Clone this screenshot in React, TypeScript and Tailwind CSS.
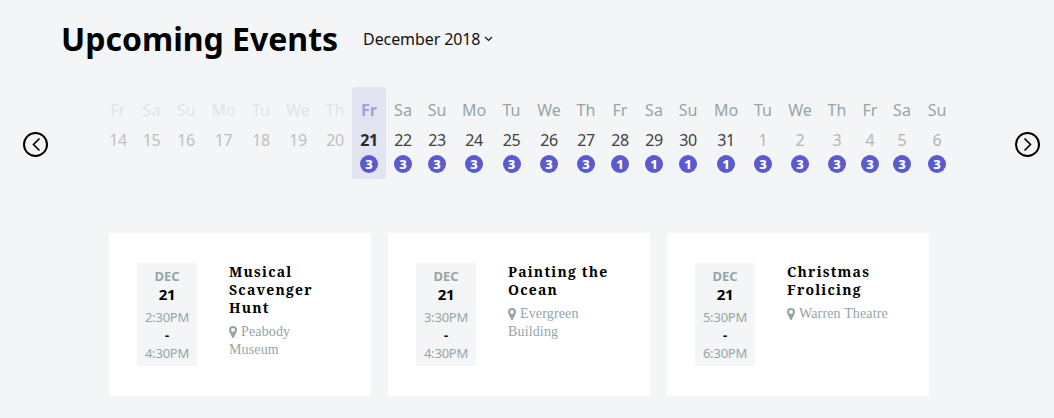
import React from "react";

type Phase = "past" | "active" | "current" | "next";
type Day = { name: string; date: number; count?: number; phase: Phase; width: string };

const days: Day[] = [
  { name: "Fr", date: 14, phase: "past", width: "w-8" },
  { name: "Sa", date: 15, phase: "past", width: "w-[35px]" },
  { name: "Su", date: 16, phase: "past", width: "w-[34px]" },
  { name: "Mo", date: 17, phase: "past", width: "w-[41px]" },
  { name: "Tu", date: 18, phase: "past", width: "w-[34px]" },
  { name: "We", date: 19, phase: "past", width: "w-10" },
  { name: "Th", date: 20, phase: "past", width: "w-[34px]" },
  { name: "Fr", date: 21, count: 3, phase: "active", width: "w-[34px]" },
  { name: "Sa", date: 22, count: 3, phase: "current", width: "w-[34px]" },
  { name: "Su", date: 23, count: 3, phase: "current", width: "w-[34px]" },
  { name: "Mo", date: 24, count: 3, phase: "current", width: "w-10" },
  { name: "Tu", date: 25, count: 3, phase: "current", width: "w-[35px]" },
  { name: "We", date: 26, count: 3, phase: "current", width: "w-10" },
  { name: "Th", date: 27, count: 3, phase: "current", width: "w-[34px]" },
  { name: "Fr", date: 28, count: 1, phase: "current", width: "w-[34px]" },
  { name: "Sa", date: 29, count: 1, phase: "current", width: "w-[34px]" },
  { name: "Su", date: 30, count: 1, phase: "current", width: "w-[34px]" },
  { name: "Mo", date: 31, count: 1, phase: "current", width: "w-[42px]" },
  { name: "Tu", date: 1, count: 3, phase: "next", width: "w-8" },
  { name: "We", date: 2, count: 3, phase: "next", width: "w-[42px]" },
  { name: "Th", date: 3, count: 3, phase: "next", width: "w-8" },
  { name: "Fr", date: 4, count: 3, phase: "next", width: "w-[34px]" },
  { name: "Sa", date: 5, count: 3, phase: "next", width: "w-[30px]" },
  { name: "Su", date: 6, count: 3, phase: "next", width: "w-10" },
];

const nameStyle: Record<Phase, string> = {
  past: "text-[#dfe4e5]",
  active: "font-bold text-[#a19fe0]",
  current: "text-[#95a5a6]",
  next: "text-[#95a5a6]",
};

const dateStyle: Record<Phase, string> = {
  past: "text-[#bfc0c2]",
  active: "font-bold text-[#2b2b2b]",
  current: "text-[#404040]",
  next: "text-[#b3b4b5]",
};

const events = [
  { title: ["Musical", "Scavenger", "Hunt"], place: ["Peabody", "Museum"], start: "2:30PM", end: "4:30PM" },
  { title: ["Painting the", "Ocean"], place: ["Evergreen", "Building"], start: "3:30PM", end: "4:30PM" },
  { title: ["Christmas", "Frolicing"], place: ["Warren Theatre"], start: "5:30PM", end: "6:30PM" },
];

function Arrow({ d, label }: { d: string; label: string }) {
  return (
    <button aria-label={label} className="block size-[25px] shrink-0">
      <svg viewBox="0 0 25 25" className="size-[25px]" fill="none" stroke="black">
        <circle cx="12.5" cy="12.5" r="11.5" strokeWidth="2" />
        <path d={d} strokeWidth="1.6" />
      </svg>
    </button>
  );
}

function Pin() {
  return (
    <svg viewBox="0 0 8 12" className="mr-1 h-3 w-2 shrink-0" fill="currentColor">
      <path
        fillRule="evenodd"
        d="M4 0a4 4 0 0 0-4 4c0 .6.1 1.1.3 1.6L3.1 11.500a1 1 0 0 0 1.8 0L7.700 5.600C7.900 5.100 8 4.600 8 4a4 4 0 0 0-4-4zm0 2.100a1.900 1.900 0 1 1 0 3.800a1.900 1.900 0 0 1 0-3.800z"
      />
    </svg>
  );
}

export default function App() {
  return (
    <div className="h-[418px] w-[1054px] overflow-hidden bg-[#f3f5f7] font-['Noto_Sans',sans-serif] text-black">
      <header className="flex h-[87px] items-start pl-[61px]">
        <h1 className="pt-[17px] text-[32px] leading-[44px] font-bold whitespace-nowrap">Upcoming Events</h1>
        <button className="mt-[27px] ml-[25px] flex items-center gap-1 text-base leading-6 tracking-[-0.1px] whitespace-nowrap text-[#111]">
          December 2018
          <svg viewBox="0 0 9 6" className="h-1.5 w-[9px]" fill="none" stroke="#111">
            <path d="M1 1l3.5 3.5L8 1" strokeWidth="1.200" />
          </svg>
        </button>
      </header>

      <section className="flex h-[146px] items-start justify-between pr-[14px] pl-[23px]">
        <div className="pt-[45px]">
          <Arrow label="Previous" d="M16.500 6.500l-6 6 6 6" />
        </div>
        <div className="-ml-[5px] flex w-[854px]">
          {days.map((day, i) => (
            <div
              key={i}
              className={`flex h-[92px] shrink-0 flex-col items-center rounded-[3px] pt-[11px] ${day.width} ${
                day.phase === "active" ? "bg-[#e3e4f1]" : ""
              }`}
            >
              <span className={`text-base leading-6 ${nameStyle[day.phase]}`}>{day.name}</span>
              <span className={`mt-1.5 text-base leading-6 tracking-[-0.3px] ${dateStyle[day.phase]}`}>{day.date}</span>
              {day.count && (
                <span className="mt-[3px] flex size-[18px] items-center justify-center rounded-full bg-[#5b5bd0] text-[13px] leading-[18px] font-extrabold text-white">
                  {day.count}
                </span>
              )}
            </div>
          ))}
        </div>
        <div className="pt-[45px]">
          <Arrow label="Next" d="M9.500 6.500l6 6-6 6" />
        </div>
      </section>

      <main className="flex gap-[17px] pl-[109px]">
        {events.map((event) => (
          <article key={event.title[0]} className="flex h-[163px] w-[262px] shrink-0 items-start bg-white pt-[30px] pl-7">
            <div className="flex h-[103px] w-[60px] shrink-0 flex-col items-center bg-[#f3f5f7] pt-1 text-[13px] leading-[18px] text-[#95a5a6]">
              <span className="font-bold">DEC</span>
              <span className="text-[15px] font-bold tracking-[-0.3px] text-black">21</span>
              <span className="mt-[5px] tracking-[-0.2px]">{event.start}</span>
              <span className="font-bold text-black">-</span>
              <span className="tracking-[-0.2px]">{event.end}</span>
            </div>
            <div className="ml-8 text-[14px] leading-[18px] whitespace-nowrap">
              <h2 className="font-['Noto_Serif','Droid_Serif','Liberation_Serif',serif] font-bold tracking-[1.2px]">
                {event.title.map((line) => (
                  <span key={line} className="block">{line}</span>
                ))}
              </h2>
              <p className="mt-1.5 font-['Liberation_Serif',serif] tracking-[0.15px] text-[#95a5a6]">
                {event.place.map((line, i) => (
                  <span key={line} className="flex items-center">
                    {i === 0 && <Pin />}
                    {line}
                  </span>
                ))}
              </p>
            </div>
          </article>
        ))}
      </main>
    </div>
  );
}
